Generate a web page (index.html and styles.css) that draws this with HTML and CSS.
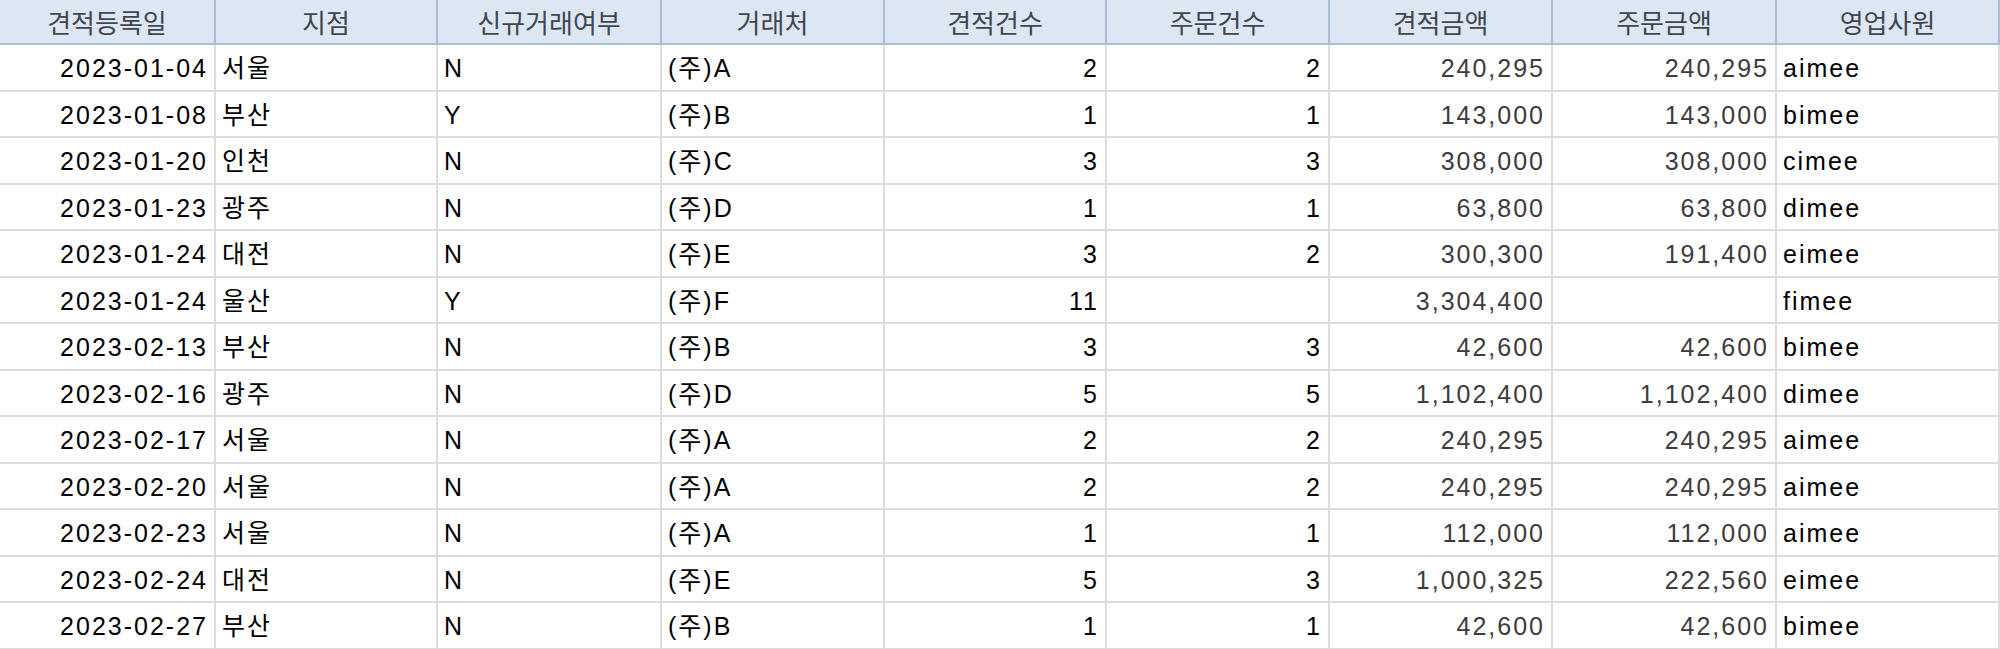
FILE: index.html
```html
<!DOCTYPE html>
<html lang="ko">
<head>
<meta charset="utf-8">
<title>견적 목록</title>
<link rel="stylesheet" href="styles.css">
</head>
<body>
<table class="grid">
  <colgroup>
    <col class="c1"><col class="c2"><col class="c3"><col class="c4"><col class="c5"><col class="c6"><col class="c7"><col class="c8"><col class="c9">
  </colgroup>
  <thead>
    <tr>
      <th>견적등록일</th><th>지점</th><th>신규거래여부</th><th>거래처</th><th>견적건수</th><th>주문건수</th><th>견적금액</th><th>주문금액</th><th>영업사원</th>
    </tr>
  </thead>
  <tbody>
    <tr><td class="r">2023-01-04</td><td>서울</td><td>N</td><td>(주)A</td><td class="r">2</td><td class="r">2</td><td class="r amt">240,295</td><td class="r amt">240,295</td><td>aimee</td></tr>
    <tr><td class="r">2023-01-08</td><td>부산</td><td>Y</td><td>(주)B</td><td class="r">1</td><td class="r">1</td><td class="r amt">143,000</td><td class="r amt">143,000</td><td>bimee</td></tr>
    <tr><td class="r">2023-01-20</td><td>인천</td><td>N</td><td>(주)C</td><td class="r">3</td><td class="r">3</td><td class="r amt">308,000</td><td class="r amt">308,000</td><td>cimee</td></tr>
    <tr><td class="r">2023-01-23</td><td>광주</td><td>N</td><td>(주)D</td><td class="r">1</td><td class="r">1</td><td class="r amt">63,800</td><td class="r amt">63,800</td><td>dimee</td></tr>
    <tr><td class="r">2023-01-24</td><td>대전</td><td>N</td><td>(주)E</td><td class="r">3</td><td class="r">2</td><td class="r amt">300,300</td><td class="r amt">191,400</td><td>eimee</td></tr>
    <tr><td class="r">2023-01-24</td><td>울산</td><td>Y</td><td>(주)F</td><td class="r">11</td><td class="r"></td><td class="r amt">3,304,400</td><td class="r amt"></td><td>fimee</td></tr>
    <tr><td class="r">2023-02-13</td><td>부산</td><td>N</td><td>(주)B</td><td class="r">3</td><td class="r">3</td><td class="r amt">42,600</td><td class="r amt">42,600</td><td>bimee</td></tr>
    <tr><td class="r">2023-02-16</td><td>광주</td><td>N</td><td>(주)D</td><td class="r">5</td><td class="r">5</td><td class="r amt">1,102,400</td><td class="r amt">1,102,400</td><td>dimee</td></tr>
    <tr><td class="r">2023-02-17</td><td>서울</td><td>N</td><td>(주)A</td><td class="r">2</td><td class="r">2</td><td class="r amt">240,295</td><td class="r amt">240,295</td><td>aimee</td></tr>
    <tr><td class="r">2023-02-20</td><td>서울</td><td>N</td><td>(주)A</td><td class="r">2</td><td class="r">2</td><td class="r amt">240,295</td><td class="r amt">240,295</td><td>aimee</td></tr>
    <tr><td class="r">2023-02-23</td><td>서울</td><td>N</td><td>(주)A</td><td class="r">1</td><td class="r">1</td><td class="r amt">112,000</td><td class="r amt">112,000</td><td>aimee</td></tr>
    <tr><td class="r">2023-02-24</td><td>대전</td><td>N</td><td>(주)E</td><td class="r">5</td><td class="r">3</td><td class="r amt">1,000,325</td><td class="r amt">222,560</td><td>eimee</td></tr>
    <tr><td class="r">2023-02-27</td><td>부산</td><td>N</td><td>(주)B</td><td class="r">1</td><td class="r">1</td><td class="r amt">42,600</td><td class="r amt">42,600</td><td>bimee</td></tr>
  </tbody>
</table>
</body>
</html>
```

FILE: styles.css
```css
html, body {
  margin: 0;
  padding: 0;
  background: #ffffff;
}

.grid {
  border-collapse: separate;
  border-spacing: 0;
  table-layout: fixed;
  width: 2000px;
  font-family: "Liberation Sans", "Noto Sans CJK KR", sans-serif;
  font-size: 25px;
  letter-spacing: 2px;
  color: #000000;
}

.c1 { width: 216px; }
.c2 { width: 222px; }
.c3 { width: 224px; }
.c4 { width: 223px; }
.c5 { width: 222px; }
.c6 { width: 223px; }
.c7 { width: 223px; }
.c8 { width: 224px; }
.c9 { width: 223px; }

.grid th {
  height: 43px;
  padding: 0;
  background: #dde7f3;
  color: #3f4650;
  font-family: "Noto Sans CJK KR", sans-serif;
  font-weight: normal;
  font-size: 26px;
  letter-spacing: 0;
  text-align: center;
  vertical-align: middle;
  border-right: 2px solid #a9bed4;
  border-bottom: 2px solid #a9bed4;
  white-space: nowrap;
  line-height: 1;
}

.grid td {
  padding: 3px 6px 0 6px;
  text-align: left;
  vertical-align: middle;
  border-right: 2px solid #dcdcdc;
  border-bottom: 2px solid #dcdcdc;
  white-space: nowrap;
  line-height: 1;
  box-sizing: border-box;
  height: 46.5px;
}

.grid td.r {
  text-align: right;
  padding-right: 6px;
}

.grid td.amt {
  color: #3c3c3c;
}
```
